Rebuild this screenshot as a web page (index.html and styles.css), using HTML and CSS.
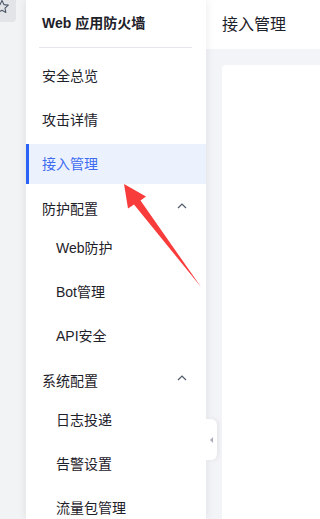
FILE: index.html
```html
<!DOCTYPE html>
<html lang="zh-CN">
<head>
<meta charset="utf-8">
<title>Web 应用防火墙</title>
<link rel="stylesheet" href="styles.css">
</head>
<body>
<div class="app">
  <div class="rail">
    <div class="rail-btn">
      <svg class="rail-star" width="16" height="16" viewBox="0 0 16 16"><path d="M8 1.5 L9.9 5.6 L14.3 6.1 L11 9.1 L11.9 13.5 L8 11.3 L4.1 13.5 L5 9.1 L1.7 6.1 L6.1 5.6 Z" fill="none" stroke="#4e5969" stroke-width="1.1" stroke-linejoin="round"/></svg>
    </div>
  </div>
  <aside class="sidebar">
    <div class="brand">Web 应用防火墙</div>
    <div class="divider"></div>
    <nav class="menu">
      <div class="item">安全总览</div>
      <div class="item">攻击详情</div>
      <div class="item active">接入管理</div>
      <div class="group">
        <div class="group-head"><span>防护配置</span><svg class="chev" width="10" height="6" viewBox="0 0 10 6"><path d="M1 5 L5 1 L9 5" fill="none" stroke="#4e5969" stroke-width="1.2"/></svg></div>
        <div class="item sub">Web防护</div>
        <div class="item sub">Bot管理</div>
        <div class="item sub">API安全</div>
      </div>
      <div class="group">
        <div class="group-head"><span>系统配置</span><svg class="chev" width="10" height="6" viewBox="0 0 10 6"><path d="M1 5 L5 1 L9 5" fill="none" stroke="#4e5969" stroke-width="1.2"/></svg></div>
        <div class="item sub">日志投递</div>
        <div class="item sub">告警设置</div>
        <div class="item sub">流量包管理</div>
      </div>
    </nav>
  </aside>
  <main class="main">
    <header class="main-header">接入管理</header>
    <div class="main-body"><div class="card"></div></div>
  </main>
  <div class="collapse-handle"><span class="tri"></span></div>
  <svg class="annot" width="234" height="519" viewBox="0 0 234 519">
    <polygon points="124,184 146,196.5 140.5,200.5 201,287 134,204.5 128,208.5" fill="#f83b3b"/>
  </svg>
</div>
</body>
</html>
```

FILE: styles.css
```css
html, body {
  margin: 0;
  padding: 0;
  background: #f3f4f7;
}
body {
  height: 519px;
  overflow: hidden;
  font-family: "Liberation Sans", "Noto Sans CJK SC", sans-serif;
  font-size: 14px;
  color: #1d2129;
}
.app {
  position: relative;
  display: flex;
  height: 519px;
}
.rail {
  width: 26px;
  flex: 0 0 26px;
  background: #f2f3f5;
}
.rail-btn {
  position: relative;
  width: 16px;
  height: 22px;
  background: #e3e4e8;
  border-radius: 0 0 4px 0;
  overflow: hidden;
}
.rail-star {
  position: absolute;
  left: -6px;
  top: -1px;
}
.sidebar {
  position: relative;
  z-index: 2;
  width: 180px;
  flex: 0 0 180px;
  background: #fff;
  box-shadow: 0 0 9px rgba(0, 0, 0, 0.09);
}
.brand {
  height: 47px;
  line-height: 46px;
  padding-left: 16px;
  font-weight: bold;
  font-size: 14px;
  color: #1d2129;
}
.divider {
  height: 1px;
  margin: 0 14px 0 13px;
  background: #e5e6eb;
}
.menu {
  padding-top: 8px;
}
.item {
  position: relative;
  height: 40px;
  line-height: 40px;
  padding-left: 16px;
  margin-bottom: 4px;
  white-space: nowrap;
}
.item.sub {
  padding-left: 30px;
}
.item.active {
  background: #ecf1fe;
  color: #3d6cf0;
}
.item.active::before {
  content: "";
  position: absolute;
  left: 0;
  top: 0;
  bottom: 0;
  width: 3px;
  background: #2a62f5;
}
.group-head {
  display: flex;
  align-items: center;
  justify-content: space-between;
  height: 40px;
  padding: 0 19px 0 16px;
}
.chev {
  margin-top: -4px;
}
.main {
  flex: 1;
  min-width: 0;
  display: flex;
  flex-direction: column;
}
.main-header {
  height: 49px;
  flex: 0 0 49px;
  background: #fff;
  padding-left: 16px;
  line-height: 50px;
  font-size: 16px;
  white-space: nowrap;
}
.main-body {
  flex: 1;
  padding: 16px 0 0 16px;
  background: #f3f4f7;
  display: flex;
}
.card {
  flex: 1;
  background: #fff;
  border-radius: 4px 0 0 0;
}
.collapse-handle {
  position: absolute;
  z-index: 3;
  left: 206px;
  top: 419px;
  width: 11px;
  height: 41px;
  background: #fff;
  border-radius: 0 6px 6px 0;
  box-shadow: 2px 0 4px rgba(0, 0, 0, 0.06);
  display: flex;
  align-items: center;
}
.tri {
  margin-left: 4px;
  width: 0;
  height: 0;
  border-top: 3px solid transparent;
  border-bottom: 3px solid transparent;
  border-right: 3px solid #a9aeb8;
}
.annot {
  position: absolute;
  left: 0;
  top: 0;
  z-index: 5;
  pointer-events: none;
}
```
